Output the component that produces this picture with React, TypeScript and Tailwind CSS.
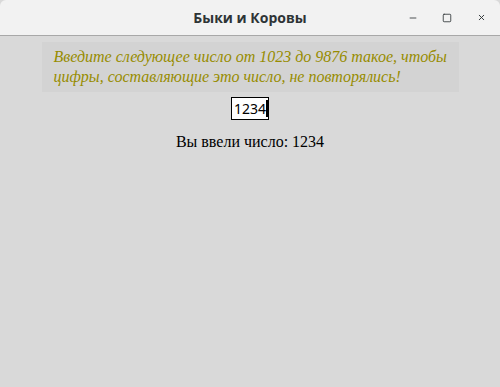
import { Minus, Square, X } from 'lucide-react';

export default function App() {
    return (
        <div className="w-[500px] h-[387px] flex flex-col bg-[#d9d9d9] overflow-hidden" style={{ fontFamily: '"Liberation Serif", serif' }}>
            {/* Title bar */}
            <div className="h-[36px] flex-shrink-0 flex items-center bg-[#f2f2f2] border-b border-[#a8a8a8] rounded-t-[6px] relative">
                <div className="flex-1 text-center text-[14px] font-bold text-[#2e3436]" style={{ fontFamily: '"Open Sans", "Noto Sans", sans-serif' }}>
                    Быки и Коровы
                </div>
                <div className="absolute right-0 top-0 h-full flex items-center">
                    <div className="w-[34px] flex justify-center text-[#2e3436]"><Minus className="w-[10px] h-[10px]" strokeWidth={2} /></div>
                    <div className="w-[34px] flex justify-center text-[#2e3436]"><Square className="w-[10px] h-[10px]" strokeWidth={2} /></div>
                    <div className="w-[34px] flex justify-center text-[#2e3436] mr-[2px]"><X className="w-[9px] h-[9px]" strokeWidth={2.5} /></div>
                </div>
            </div>

            {/* Content */}
            <div className="flex flex-col items-center pt-[6px]">
                <div className="w-[417px] bg-[#d3d3d3] pl-[12px] pr-[2px] pt-[5px] pb-[5px] text-[16px] leading-[20px] italic text-[#978c00]">
                    Введите следующее число от 1023 до 9876 такое, чтобы цифры, составляющие это число, не повторялись!
                </div>
                <div className="mt-[5px] w-[38px] h-[23px] bg-white border border-black flex items-center pl-[2px] text-[14px] text-black" style={{ fontFamily: '"Noto Sans", sans-serif' }}>
                    <span>1234</span>
                    <span className="w-[2px] h-[17px] bg-black"></span>
                </div>
                <div className="mt-[10px] text-[16px] text-black">Вы ввели число: 1234</div>
            </div>
        </div>
    );
}
